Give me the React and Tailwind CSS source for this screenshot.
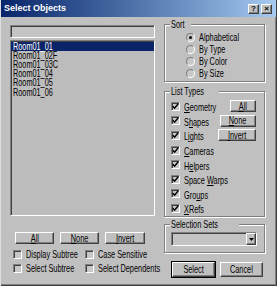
import React from 'react';

const font = { fontFamily: '"Liberation Sans",Arial,sans-serif' };

const raised = 'border border-t-white border-l-white border-r-[#404040] border-b-[#404040] shadow-[inset_-1px_-1px_0_#808080]';
const sunken = 'border border-t-[#808080] border-l-[#808080] border-r-white border-b-white shadow-[inset_1px_1px_0_#404040]';
const group = 'relative border border-[#808080] shadow-[inset_1px_1px_0_#fff,1px_1px_0_#fff]';

// narrow text, the dialog font is condensed in the shot
const T = ({ children, center, small }) => (
    <span className={`inline-block whitespace-nowrap leading-[9px] ${small ? 'text-[10px] scale-x-[0.73]' : 'text-[10.5px] scale-x-[0.7]'} ${center ? 'origin-center' : 'origin-left'}`}>
        {children}
    </span>
);

const Check = ({ checked }) => (
    <div className={`w-[9px] h-[9px] shrink-0 bg-[#c8c8c8] flex items-center justify-center ${sunken}`}>
        {checked && (
            <svg width="7" height="7" viewBox="0 0 7 7">
                <path d="M0.8 3.2 L2.6 5.2 L6.2 0.8" fill="none" stroke="#000" strokeWidth="1.4" />
            </svg>
        )}
    </div>
);

const Radio = ({ checked }) => (
    <div className="w-[9px] h-[9px] shrink-0 rounded-full bg-[#c8c8c8] border border-t-[#808080] border-l-[#808080] border-r-white border-b-white flex items-center justify-center">
        {checked && <div className="w-[3px] h-[3px] rounded-full bg-black" />}
    </div>
);

const Btn = ({ children, className = '' }) => (
    <div className={`bg-[#c0c0c0] flex items-center justify-center text-black ${raised} ${className}`}>
        <T center>{children}</T>
    </div>
);

const GroupLabel = ({ children }) => (
    <span className="absolute left-[5px] top-[-6px] h-[11px] bg-[#c0c0c0] px-[1px] flex items-center">
        <T>{children}</T>
    </span>
);

export default function App() {
    const items = ['Room01_01', 'Room01_02F', 'Room01_03C', 'Room01_04', 'Room01_05', 'Room01_06'];
    const types = [
        { pre: '', u: 'G', post: 'eometry', btn: <><u>A</u>ll</> },
        { pre: 'S', u: 'h', post: 'apes', btn: <><u>N</u>one</> },
        { pre: 'L', u: 'i', post: 'ghts', btn: <><u>I</u>nvert</> },
        { pre: '', u: 'C', post: 'ameras' },
        { pre: 'H', u: 'e', post: 'lpers' },
        { pre: 'Space ', u: 'W', post: 'arps' },
        { pre: 'Gro', u: 'u', post: 'ps' },
        { pre: '', u: 'X', post: 'Refs' },
    ];

    return (
        <div style={font} className="w-[277px] h-[286px] overflow-hidden bg-[#c0c0c0] text-black flex flex-col shadow-[inset_1px_0_0_#dfdfdf,inset_-1px_-1px_0_#404040,inset_-2px_-2px_0_#808080]">
            {/* Title bar */}
            <div className="h-[17px] mx-[1px] flex items-center justify-between pl-[3px] pr-[4px] bg-gradient-to-r from-[#0a246a] to-[#a6caf0]">
                <span className="text-white font-bold text-[9px] leading-none">Select Objects</span>
                <div className="flex gap-[2px]">
                    <div className={`w-[11px] h-[10px] bg-[#c0c0c0] flex items-center justify-center text-[8px] font-bold leading-none ${raised}`}>?</div>
                    <div className={`w-[11px] h-[10px] bg-[#c0c0c0] flex items-center justify-center text-[8px] font-bold leading-none ${raised}`}>×</div>
                </div>
            </div>

            <div className="flex pl-[10px] pt-[8px]">
                {/* Left column */}
                <div className="w-[145px] flex flex-col">
                    <div className={`h-[13px] bg-[#c4c4c4] ${sunken}`} />
                    <div className={`mt-[2px] h-[176px] bg-[#bcbcbc] pt-[1px] ${sunken}`}>
                        {items.map((it, i) => (
                            <div key={it} className={`h-[9.1px] flex items-center pl-[2px] ${i === 0 ? 'bg-[#0a246a] text-white' : ''}`}>
                                <T small>{it}</T>
                            </div>
                        ))}
                    </div>
                    <div className="mt-[16px] flex gap-[6px] pl-[5px]">
                        <Btn className="w-[39px] h-[12px]"><u>A</u>ll</Btn>
                        <Btn className="w-[39px] h-[12px]"><u>N</u>one</Btn>
                        <Btn className="w-[40px] h-[12px]"><u>I</u>nvert</Btn>
                    </div>
                    <div className="mt-[6px] grid grid-cols-[72px_1fr] gap-y-[5px] pl-[3px]">
                        <div className="flex items-center gap-[4px]"><Check /><T>Display Subtree</T></div>
                        <div className="flex items-center gap-[4px]"><Check /><T>Case Sensitive</T></div>
                        <div className="flex items-center gap-[4px]"><Check /><T>Select Subtree</T></div>
                        <div className="flex items-center gap-[4px]"><Check /><T>Select Dependents</T></div>
                    </div>
                </div>

                {/* Right column */}
                <div className="ml-[9px] w-[101px] flex flex-col -mt-[1px]">
                    <div className={`${group} h-[58px] pt-[8px] pl-[21px] flex flex-col gap-[3px]`}>
                        <GroupLabel>Sort</GroupLabel>
                        {['Alphabetical', 'By Type', 'By Color', 'By Size'].map((s, i) => (
                            <div key={s} className="h-[9px] flex items-center gap-[4px]">
                                <Radio checked={i === 0} />
                                <T>{s}</T>
                            </div>
                        ))}
                    </div>

                    <div className={`${group} mt-[9px] h-[126px] pt-[7px] pl-[6px] pr-[8px]`}>
                        <GroupLabel>List Types</GroupLabel>
                        {types.map((t) => (
                            <div key={t.post} className="h-[14.6px] flex items-center">
                                <Check checked />
                                <span className="ml-[4px] flex-1"><T>{t.pre}<u>{t.u}</u>{t.post}</T></span>
                                {t.btn && <Btn className="w-[38px] h-[12px]">{t.btn}</Btn>}
                            </div>
                        ))}
                    </div>

                    <div className={`${group} mt-[7px] h-[29px] pt-[7px] pl-[6px] pr-[7px]`}>
                        <GroupLabel>Selection Sets</GroupLabel>
                        <div className={`h-[14px] bg-[#c4c4c4] flex justify-end items-stretch ${sunken}`}>
                            <div className={`w-[10px] bg-[#c0c0c0] flex items-center justify-center ${raised}`}>
                                <svg width="5" height="3" viewBox="0 0 5 3"><path d="M0 0 H5 L2.5 3 Z" fill="#000" /></svg>
                            </div>
                        </div>
                    </div>

                    <div className="mt-[9px] flex gap-[5px] pl-[8px]">
                        <Btn className="w-[43px] h-[15px] outline outline-1 outline-black">Select</Btn>
                        <Btn className="w-[43px] h-[15px]">Cancel</Btn>
                    </div>
                </div>
            </div>
        </div>
    );
}
